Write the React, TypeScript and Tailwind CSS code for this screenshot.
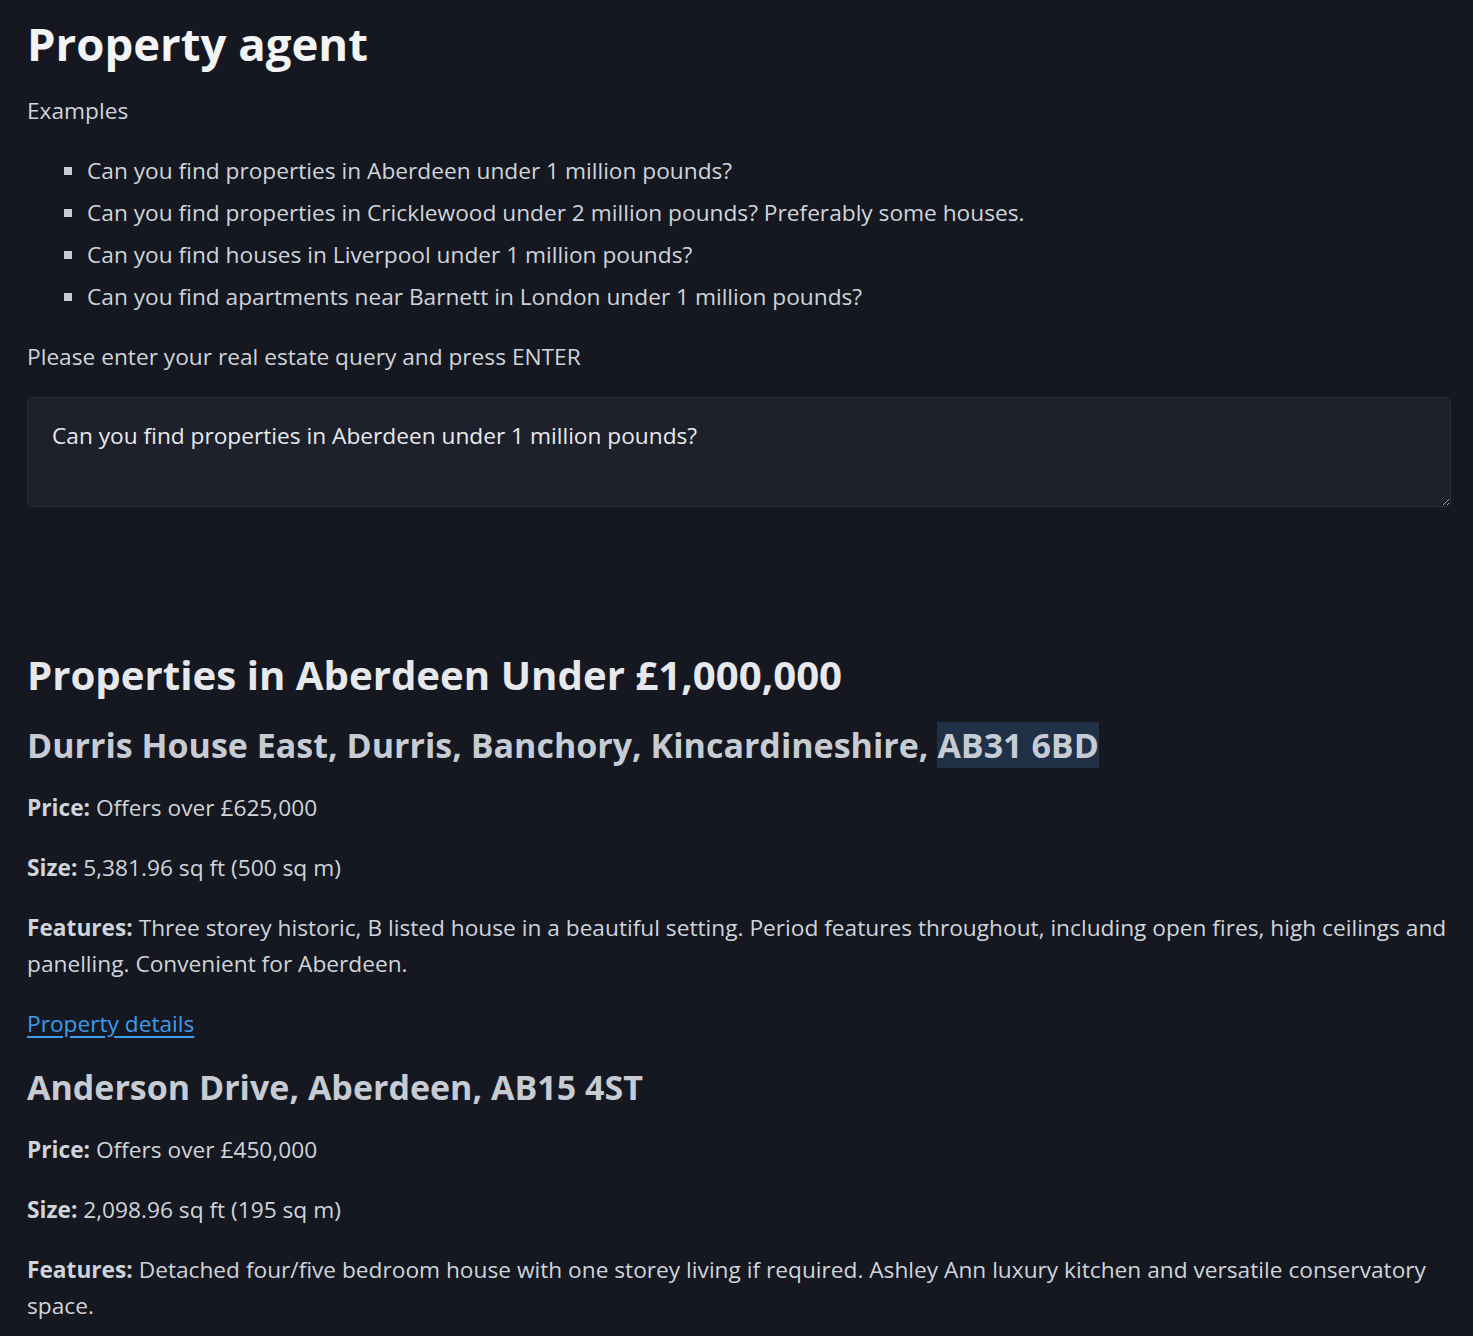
import { useState } from "react";

const examples = [
  "Can you find properties in Aberdeen under 1 million pounds?",
  "Can you find properties in Cricklewood under 2 million pounds? Preferably some houses.",
  "Can you find houses in Liverpool under 1 million pounds?",
  "Can you find apartments near Barnett in London under 1 million pounds?",
];

type Property = {
  address: string;
  postcode?: string;
  price: string;
  size: string;
  features: string;
  link?: boolean;
};

const properties: Property[] = [
  {
    address: "Durris House East, Durris, Banchory, Kincardineshire, ",
    postcode: "AB31 6BD",
    price: "Offers over £625,000",
    size: "5,381.96 sq ft (500 sq m)",
    features:
      "Three storey historic, B listed house in a beautiful setting. Period features throughout, including open fires, high ceilings and panelling. Convenient for Aberdeen.",
    link: true,
  },
  {
    address: "Anderson Drive, Aberdeen, AB15 4ST",
    price: "Offers over £450,000",
    size: "2,098.96 sq ft (195 sq m)",
    features:
      "Detached four/five bedroom house with one storey living if required. Ashley Ann luxury kitchen and versatile conservatory space.",
  },
];

const App = () => {
  const [query, setQuery] = useState(examples[0]);

  return (
    <div className="min-h-screen bg-[#151820] pl-[27px] pr-[22px] pt-[10px] pb-10 font-['Open_Sans',sans-serif] text-[22.7px] leading-[36px] text-[#d0d4db]">
      <h1 className="text-[45.5px] leading-[66px] font-bold text-[#f3f4f6]">
        Property agent
      </h1>

      <p className="mt-[17px]">Examples</p>

      <ul className="mt-[24px] flex flex-col gap-[6px] pl-[60px]">
        {examples.map((e) => (
          <li key={e} className="list-[square] marker:text-[#c9ccd2]">
            {e}
          </li>
        ))}
      </ul>

      <p className="mt-[24px]">Please enter your real estate query and press ENTER</p>

      <textarea
        className="mt-[22px] block h-[110px] w-full resize-y rounded-[6px] border border-[#2b2f3a] bg-[#1e212b] px-[24px] pt-[20px] text-[#e8eaee] outline-none"
        value={query}
        onChange={(ev) => setQuery(ev.target.value)}
      />

      <h2 className="mt-[143px] text-[40.2px] leading-[50px] font-bold text-[#e6e8ec]">
        Properties in Aberdeen Under £1,000,000
      </h2>

      {properties.map((p) => (
        <div key={p.address}>
          <h3 className="mt-[20px] text-[34px] leading-[50px] font-bold text-[#c7cbd3]">
            {p.address}
            {p.postcode && <span className="bg-[#1f3047]">{p.postcode}</span>}
          </h3>
          <p className="mt-[20px]">
            <b className="font-bold">Price:</b> {p.price}
          </p>
          <p className="mt-[24px]">
            <b className="font-bold">Size:</b> {p.size}
          </p>
          <p className="mt-[24px]">
            <b className="font-bold">Features:</b> {p.features}
          </p>
          {p.link && (
            <p className="mt-[24px]">
              <a href="#" className="text-[#3d9cec] underline underline-offset-[4px]">
                Property details
              </a>
            </p>
          )}
        </div>
      ))}
    </div>
  );
};

export default App;
